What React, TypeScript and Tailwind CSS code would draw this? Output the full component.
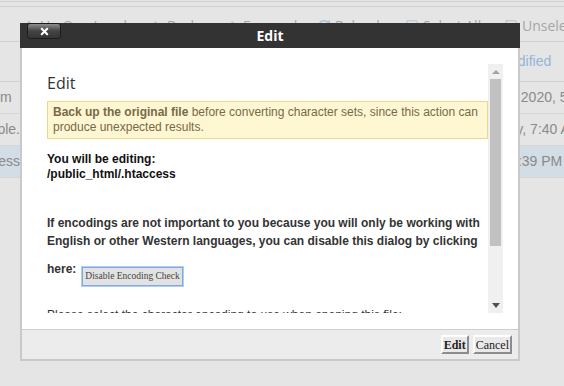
import { ArrowUp, ArrowLeft, ArrowRight, RotateCw, SquareCheck, Square, X } from "lucide-react";

/**
 * Encoding edit dialog over a greyed-out file manager listing
 */

const sans = "font-['Liberation_Sans',Arial,sans-serif]";
const serif = "font-['Liberation_Serif','Times_New_Roman',serif]";
const open = "font-['Open_Sans','Noto_Sans',sans-serif]";

function Toolbar() {
  const items = [
    { icon: <ArrowUp size={14} strokeWidth={2.5} />, label: "Up One Level", w: "w-[127px]" },
    { icon: <ArrowLeft size={14} strokeWidth={2.5} />, label: "Back", w: "w-[76px]" },
    { icon: <ArrowRight size={14} strokeWidth={2.5} />, label: "Forward", w: "w-[92px]" },
    { icon: <RotateCw size={14} strokeWidth={2.5} />, label: "Reload", w: "w-[88px]" },
    { icon: <SquareCheck size={14} strokeWidth={1.5} />, label: "Select All", w: "w-[99px]" },
    { icon: <Square size={14} strokeWidth={1.5} />, label: "Unselect All", w: "w-[120px]" },
  ];
  return (
    <div className={`flex h-[34px] pl-[22px] pt-[4px] text-[14px] leading-[18px] ${open}`}>
      {items.map((it) => (
        <div key={it.label} className={`flex items-center gap-[4px] shrink-0 ${it.w}`}>
          <span className="text-[#a9bfd6]">{it.icon}</span>
          <span className="text-[#a6a6a6] whitespace-nowrap">{it.label}</span>
        </div>
      ))}
    </div>
  );
}

function Row({
  name,
  date,
  datePad,
  selected,
  alignStart,
}: {
  name: string;
  date: string;
  datePad: string;
  selected?: boolean;
  alignStart?: boolean;
}) {
  return (
    <div
      className={`flex h-[32px] items-center border-b border-[#d6d6d6] text-[14px] text-[#8a8a8a] ${sans} ${
        selected ? "bg-[#d3dde5]" : ""
      }`}
    >
      <div
        className={`w-[20px] overflow-hidden whitespace-nowrap flex shrink-0 ${
          alignStart ? "justify-start" : "justify-end"
        }`}
      >
        {name}
      </div>
      <div className="flex-1" />
      <div className={`w-[100px] overflow-hidden whitespace-nowrap shrink-0 ${datePad}`}>{date}</div>
    </div>
  );
}

function Background() {
  return (
    <div className="flex flex-col">
      <div className="h-[1px]" />
      <div className="h-[6px] border-y border-[#d0d0d0]" />
      <Toolbar />
      <div className={`flex h-[41px] items-center border-y border-[#d0d0d0] text-[14px] text-[#93b5d6] ${sans}`}>
        <div className="flex-1" />
        <div className="w-[100px] pl-[4px] whitespace-nowrap overflow-hidden">Last Modified</div>
      </div>
      <Row name="m" date="Jan 28, 2020, 5:14 PM" datePad="pl-[7px]" alignStart />
      <Row name="ple." date="Today, 7:40 AM" datePad="pl-[22px]" />
      <Row name=".htaccess" date="Today, 2:39 PM" datePad="pl-[2px]" selected />
    </div>
  );
}

function ScrollBar() {
  return (
    <div className="w-[15px] shrink-0 bg-[#f0f0f0] flex flex-col items-center">
      <div className="h-[15px] flex items-center justify-center">
        <div className="w-0 h-0 border-x-[4px] border-x-transparent border-b-[4px] border-b-[#a3a3a3]" />
      </div>
      <div className="w-[11px] h-[167px] bg-[#c1c1c1]" />
      <div className="flex-1" />
      <div className="h-[15px] flex items-center justify-center">
        <div className="w-0 h-0 border-x-[4px] border-x-transparent border-t-[5px] border-t-[#505050]" />
      </div>
    </div>
  );
}

function FooterButton({ label, bold }: { label: string; bold?: boolean }) {
  return (
    <button
      className={`h-[19px] px-[1px] bg-[#e9e9e9] border-2 border-t-white border-l-white border-b-[#8c8c8c] border-r-[#8c8c8c] text-[12px] leading-[14px] text-[#222] ${serif} ${
        bold ? "font-bold" : ""
      }`}
    >
      {label}
    </button>
  );
}

function EditDialog() {
  return (
    <div className="absolute left-[20px] top-[23px] w-[500px] h-[338px] flex flex-col">
      {/* Title bar */}
      <div className="relative h-[25px] bg-[#333333] flex items-center justify-center shrink-0">
        <button className="absolute left-[7px] top-0 w-[34px] h-[16px] rounded-[3px] border border-[#1c1c1c] bg-gradient-to-b from-[#8e8e8e] via-[#444444] to-[#353535] flex items-center justify-center">
          <X size={11} strokeWidth={4.5} color="#ffffff" />
        </button>
        <span className={`text-white text-[14px] font-bold ${open}`}>Edit</span>
      </div>

      <div className="flex-1 flex flex-col border-x-2 border-b-2 border-[#c9c9c9]">
        {/* Scrollable body */}
        <div className="h-[281px] bg-white pl-[25px] pr-[15px] py-[16px] flex shrink-0">
          <div className="flex-1 flex overflow-hidden">
            <div className="flex-1 pt-[8px]">
              <h2 className={`text-[16px] leading-[22px] text-[#333] ${open}`}>Edit</h2>
              <div
                className={`mt-[7px] border border-[#e6d98c] bg-[#fff6d2] px-[5px] py-[3px] text-[12px] leading-[15px] text-[#776a48] ${sans}`}
              >
                <b>Back up the original file</b> before converting character sets, since this action can produce
                unexpected results.
              </div>
              <div className={`mt-[13px] text-[12px] leading-[15px] font-bold text-[#111] ${sans}`}>
                <div>You will be editing:</div>
                <div>/public_html/.htaccess</div>
              </div>
              <div className={`mt-[32px] text-[12px] leading-[18px] font-bold text-[#333] ${sans}`}>
                If encodings are not important to you because you will only be working with English or other
                Western languages, you can disable this dialog by clicking
              </div>
              <div className={`mt-[10px] flex items-start text-[12px] leading-[18px] font-bold text-[#333] ${sans}`}>
                <span>here:</span>
                <button
                  className={`ml-[6px] mt-[7px] h-[19px] px-[2px] bg-[#e2e2e2] border border-[#7fa9e2] outline outline-1 outline-[#b3cdef] text-[9.5px] leading-[15px] font-normal text-[#444] ${serif}`}
                >
                  Disable Encoding Check
                </button>
              </div>
              <div className={`mt-[20px] text-[12px] leading-[18px] text-[#333] ${sans}`}>
                Please select the character encoding to use when opening this file:
              </div>
            </div>
            <ScrollBar />
          </div>
        </div>

        {/* Footer */}
        <div className="flex-1 bg-[#ececec] border-t border-[#cfcfcf] flex items-center justify-end gap-[4px] pr-[6px]">
          <FooterButton label="Edit" bold />
          <FooterButton label="Cancel" />
        </div>
      </div>
    </div>
  );
}

export default function App() {
  return (
    <div className="relative w-[564px] h-[386px] overflow-hidden bg-[#e5e5e5]">
      <Background />
      <EditDialog />
    </div>
  );
}
